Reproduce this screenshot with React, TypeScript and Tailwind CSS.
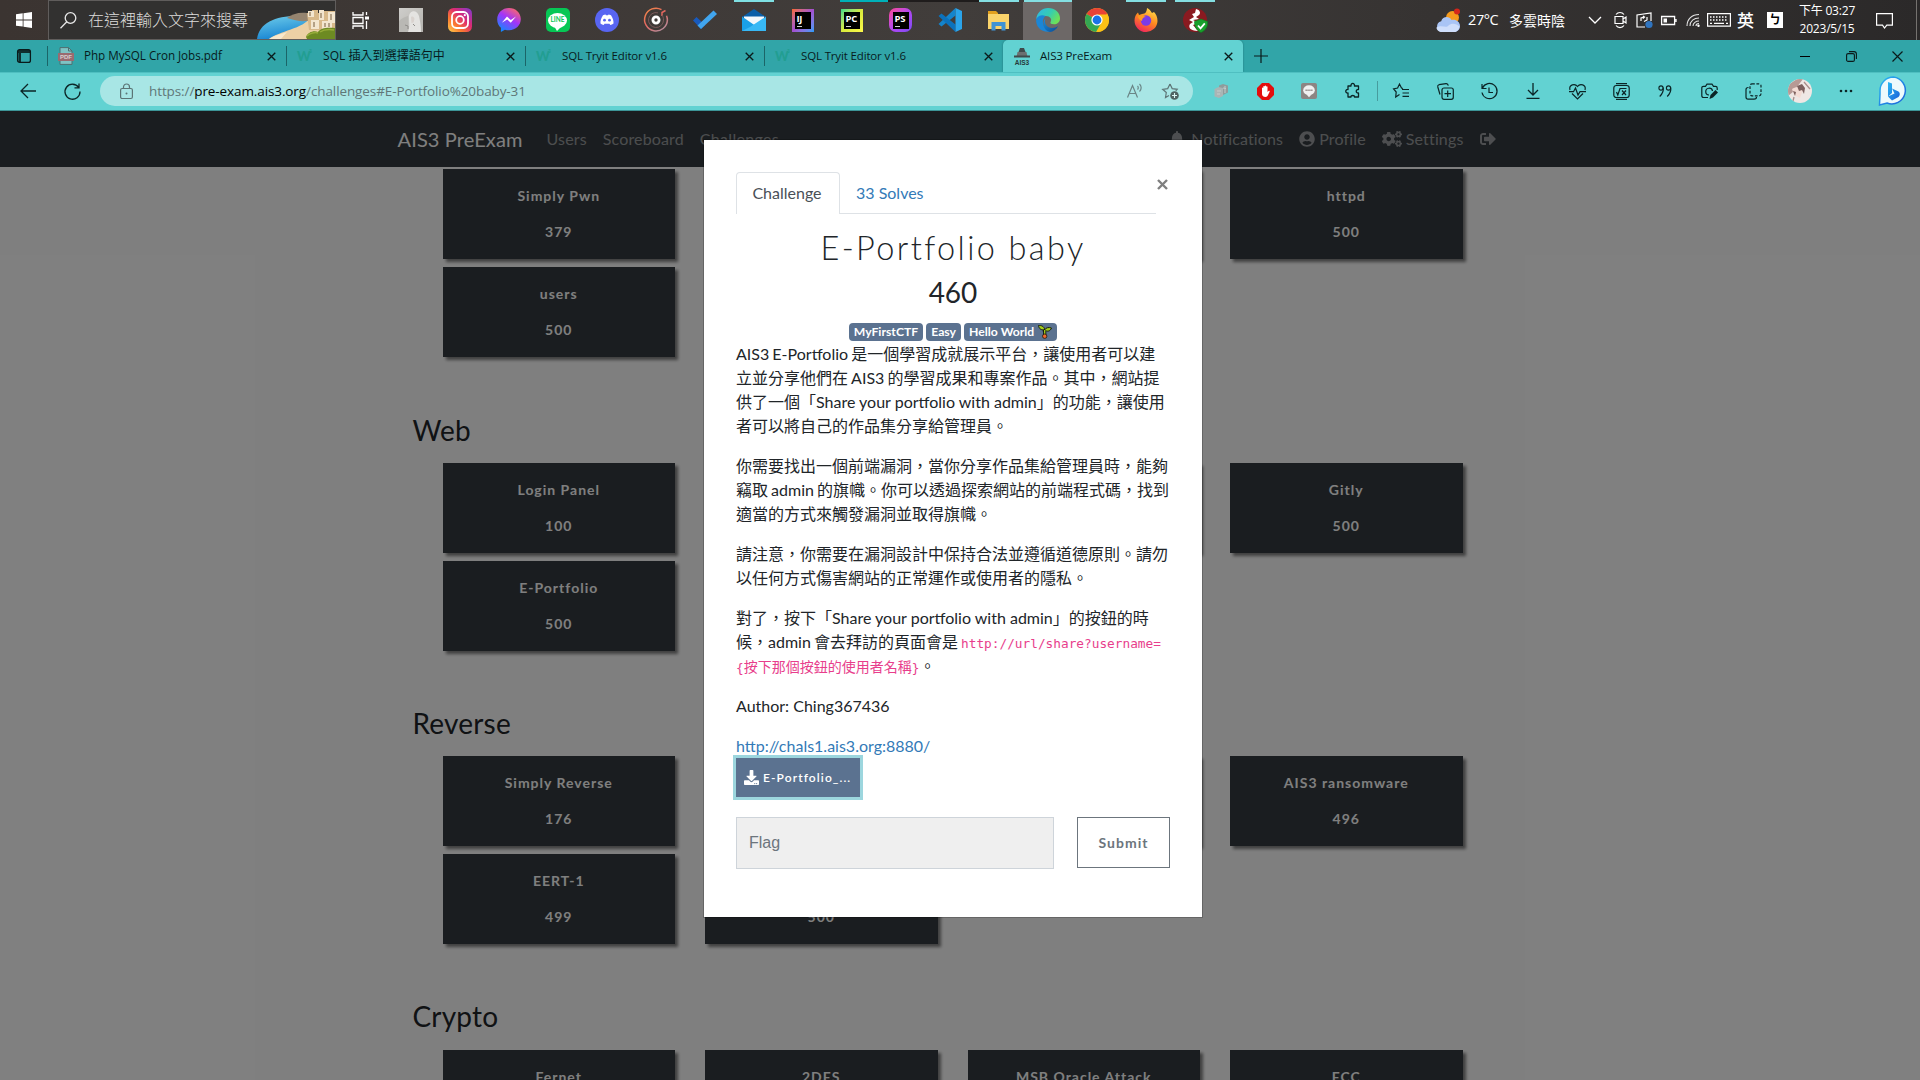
import React from "react";
import { FaBell, FaUserCircle, FaCogs, FaSignOutAlt, FaDownload } from "react-icons/fa";

type Kids = { children?: React.ReactNode };

/* ---------- taskbar ---------- */

const TaskIcon = ({ children }: Kids) => (
  <div className="flex h-10 w-[49px] shrink-0 items-center justify-center">{children}</div>
);

const Svg = ({ children, s = 24, vb = "0 0 24 24" }: Kids & { s?: number; vb?: string }) => (
  <svg width={s} height={s} viewBox={vb} fill="none" className="shrink-0 overflow-visible">
    {children}
  </svg>
);

const TaskView = () => (
  <Svg s={17} vb="0 0 17 17">
    <path d="M1 0v3h10V0M1 17v-3h10v3M1 5.500h10v6H1zM14.500 0v3M14.500 9v8" stroke="#fff" strokeWidth="1.300" />
    <path d="M13 4.500h4v3h-4z" fill="#fff" />
  </Svg>
);
const Portrait = () => (
  <Svg>
    <defs>
      <linearGradient id="pt" x1="0" y1="0" x2="1" y2="1">
        <stop offset="0" stopColor="#cfcecb" />
        <stop offset="1" stopColor="#b4b2ae" />
      </linearGradient>
    </defs>
    <rect width="24" height="24" fill="url(#pt)" />
    <path d="M0 13c3-3 6-4 9-5v16H0z" fill="#b9b8b4" />
    <path d="M10 9c0-7 8-8 10-1 1 5 2 9 2 16H9c2-5 1-9 1-15z" fill="#e4e3e1" />
    <path d="M12 9c2-1 3 0 3.500 2l-1 3.500-2 .5z" fill="#d9d2ce" />
    <path d="M6 17l3 1v3M14 16l2 2" stroke="#8f8d8a" strokeWidth="1" />
  </Svg>
);
const Instagram = () => (
  <Svg>
    <defs>
      <linearGradient id="ig" x1="0" y1="1" x2="1" y2="0">
        <stop offset="0" stopColor="#ffd34f" />
        <stop offset=".3" stopColor="#fb7a2f" />
        <stop offset=".6" stopColor="#dc2a73" />
        <stop offset="1" stopColor="#7a3bd6" />
      </linearGradient>
    </defs>
    <rect width="24" height="24" rx="5.500" fill="url(#ig)" />
    <rect x="4" y="4" width="16" height="16" rx="4.500" stroke="#fff" strokeWidth="1.800" />
    <circle cx="12" cy="12" r="3.800" stroke="#fff" strokeWidth="1.800" />
    <circle cx="16.800" cy="7.200" r="1.100" fill="#fff" />
  </Svg>
);
const Messenger = () => (
  <Svg>
    <defs>
      <linearGradient id="ms" x1="0.2" y1="1" x2="0.8" y2="0">
        <stop offset="0" stopColor="#0a8cff" />
        <stop offset=".55" stopColor="#a334fa" />
        <stop offset="1" stopColor="#ff6a66" />
      </linearGradient>
    </defs>
    <path d="M12 0C5.300 0 .2 4.900.2 11.400c0 3.400 1.400 6.300 3.700 8.300V24l4-2.200c1.300.4 2.600.5 4.100.5 6.700 0 11.800-4.800 11.800-11.200S18.700 0 12 0z" fill="url(#ms)" />
    <path d="M4.800 14.800l5.200-6.200 3.800 3.400 5.200-3.400-5.200 6.200-3.600-3.400z" fill="#fff" />
  </Svg>
);
const Line = () => (
  <div className="flex h-6 w-6 items-center justify-center rounded-[5px] bg-[#06c755]">
    <div className="relative flex h-[15px] w-[19px] items-center justify-center rounded-[50%] bg-white">
      <span className="text-[6.5px] leading-none font-bold text-[#06c755]">LINE</span>
      <svg className="absolute top-[13px] left-[6px]" width="8" height="5" viewBox="0 0 8 5"><path d="M0 0h8L3 5z" fill="#fff" /></svg>
    </div>
  </div>
);
const Discord = () => (
  <Svg>
    <circle cx="12" cy="12" r="12" fill="#5865f2" />
    <path d="M8 7.300c1-.5 2-.8 2.500-.8l.4.8h2.200l.4-.8c.6 0 1.600.3 2.500.8 2 3 2.700 5.500 2.500 8.300-1 .8-2 1.300-3.200 1.500l-.8-1.400h-5l-.8 1.400c-1.200-.2-2.200-.7-3.200-1.500C5.300 12.800 6 10.300 8 7.300z" fill="#fff" />
    <circle cx="9.500" cy="12.200" r="1.400" fill="#5865f2" />
    <circle cx="14.500" cy="12.200" r="1.400" fill="#5865f2" />
  </Svg>
);
const Groove = () => (
  <Svg>
    <defs>
      <linearGradient id="gr" x1="0" y1="0" x2="0.7" y2="1">
        <stop offset="0" stopColor="#f28b45" />
        <stop offset=".5" stopColor="#e6685f" />
        <stop offset="1" stopColor="#b98a98" />
      </linearGradient>
    </defs>
    <path d="M17.500 1.600A11.400 11.400 0 1 0 23.400 12c0-1.600-.3-3-.9-4.300" stroke="url(#gr)" strokeWidth="1.500" />
    <path d="M18 8V4.500l3.500-2" stroke="#e6685f" strokeWidth="1.500" />
    <path d="M18 7c1 1.400 1.500 3 1.500 5A7.500 7.500 0 1 1 14 4.800" stroke="#7a5a5a" strokeWidth="1" />
    <circle cx="12" cy="12" r="3.100" stroke="#fff" strokeWidth="2.800" />
  </Svg>
);
const ToDo = () => (
  <Svg>
    <path d="M0 12.500l3.500-3.500L12 17l-4 4z" fill="#185abd" />
    <path d="M8 21l-3.500-3.500L20.500 2.500 24 6z" fill="#41a5ee" />
  </Svg>
);
const Mail = () => (
  <Svg>
    <path d="M0 9l12-8 12 8z" fill="#0a5ea8" />
    <path d="M2 8.500h20V17H2z" fill="#f3f7fb" />
    <path d="M0 8.500L13 17.500 24 23H0z" fill="#1aa0e8" />
    <path d="M24 8.500L8 19l-8 4h24z" fill="#38b8f5" />
  </Svg>
);
const JetBrains = ({ label, bg, hex }: { label: string; bg: string; hex?: boolean }) => (
  <div className={hex ? `flex h-[24px] w-[23px] items-center justify-center rounded-[7px] ${bg}` : `flex h-[23px] w-[22px] items-center justify-center ${bg}`}>
    <div className="flex h-[17px] w-[16px] flex-col bg-black pt-[2px] pl-[2px]">
      <span className="font-['Open_Sans'] text-[9.5px] leading-[9px] font-bold tracking-[-0.3px] text-white">{label}</span>
      <span className="mt-[3px] h-[1.5px] w-[5px] bg-[#cfcfcf]" />
    </div>
  </div>
);
const VSCode = () => (
  <Svg>
    <path d="M17.500 7v10L11 12z" fill="none" />
    <path d="M17.500 0v7.500L3.500 18.500.5 16z" fill="#1484cc" />
    <path d="M17.500 24v-7.500L3.500 5.500.5 8z" fill="#0b72bd" />
    <path d="M17.500 0L24 3v18l-6.500 3z" fill="#2ba4ea" />
  </Svg>
);
const Explorer = () => (
  <Svg>
    <path d="M1 3h8l2 2v4H1z" fill="#e3a11e" />
    <path d="M1 6h21v15H1z" fill="#fbd46b" />
    <path d="M4.500 22.500v-8.500h14v8.500h-4V18h-6v4.500z" fill="#3f93d4" />
  </Svg>
);
const Edge = () => (
  <Svg>
    <defs>
      <linearGradient id="eg" x1="0" y1="0" x2="1" y2=".5">
        <stop offset="0" stopColor="#2fb6ea" />
        <stop offset=".6" stopColor="#36cdb0" />
        <stop offset="1" stopColor="#6ce05a" />
      </linearGradient>
      <linearGradient id="eb" x1="0" y1="0" x2="1" y2="1">
        <stop offset="0" stopColor="#1c8fdc" />
        <stop offset="1" stopColor="#0c4a92" />
      </linearGradient>
    </defs>
    <path d="M.2 11C1 4.500 6 0 12.200 0 19 0 24 4.800 24 10.200c0 4-3 6-6 6-2.800 0-4-1-3.500-2 2-3-.5-6.200-4.500-6.200C5.500 8 2 9.500.2 11z" fill="url(#eg)" />
    <path d="M.2 11C3 6.500 7 7 9.500 8c-2 2-3 4.200-2.500 7.200.8 4.500 4.500 8 9 8C7 26-.8 19.500.2 11z" fill="#1b86d6" />
    <path d="M9.500 10.500c-2 4 1 9.500 6.500 9.500 2.500 0 4.500-.8 6.200-2-2 4-5 5.600-8.200 6C7.500 23 5.500 14 9.500 10.500z" fill="url(#eb)" />
  </Svg>
);
const Chrome = () => (
  <Svg>
    <circle cx="12" cy="12" r="12" fill="#fbc116" />
    <path d="M12 12L1.600 6a12 12 0 0 1 20.800 0z" fill="#ea4335" />
    <path d="M12 12L1.600 6a12 12 0 0 0 9.400 18l5.500-9.500z" fill="#34a853" />
    <path d="M12 6.500h10.700A12 12 0 0 1 12 24l5-9z" fill="#fbc116" />
    <circle cx="12" cy="12" r="5.600" fill="#fff" />
    <circle cx="12" cy="12" r="4.400" fill="#1a73e8" />
  </Svg>
);
const Firefox = () => (
  <Svg>
    <defs>
      <linearGradient id="ff" x1=".8" y1="0" x2=".3" y2="1">
        <stop offset="0" stopColor="#ffe14d" />
        <stop offset=".5" stopColor="#ff8a1f" />
        <stop offset="1" stopColor="#f0245c" />
      </linearGradient>
    </defs>
    <path d="M13 0c4 2 4 4 5 5l2-1c2 2 3.500 5 3.500 9A11.300 11.300 0 0 1 12 24 11.500 11.500 0 0 1 .5 12.500C.5 9 2 6 4 4.500L5 7l3-1c2-.3 3-.5 4-2 .7-1.200 1-2.500 1-4z" fill="url(#ff)" />
    <circle cx="12" cy="12.500" r="5.200" fill="#7a3be8" />
    <path d="M4 8c3-2 6 0 8 1-3 0-4 2-4 4-2-1-4-2-4-5z" fill="#ff9b22" />
  </Svg>
);
const Wireless = () => (
  <Svg>
    <circle cx="12" cy="12" r="12" fill="#8a1a20" />
    <path d="M13 1c4 1 5 4 3 6l-3 2 3 2-6 1 6 3-6 2 5 6C7 23 5 19 7 16l3-2-4-2 5-3-2-3 3-1z" fill="#fff" />
    <path d="M18 11l6.500 2.500c.5 5-2 9-6.500 11-4.500-2-6.500-6-6.500-11z" fill="#18a02c" stroke="#0c7a1c" strokeWidth=".6" />
    <path d="M15 17.500l2.500 2.800 4.300-5" stroke="#fff" strokeWidth="1.800" />
  </Svg>
);

const SearchArt = () => (
  <svg width="78" height="38" viewBox="0 0 78 38" className="shrink-0">
    <defs>
      <linearGradient id="sea" x1="0" y1="0" x2="0.4" y2="1">
        <stop offset="0" stopColor="#6fcdea" />
        <stop offset="1" stopColor="#1583d2" />
      </linearGradient>
    </defs>
    <path d="M0 38C2 22 18 15 40 15l22 2-24 21z" fill="url(#sea)" />
    <path d="M12 38c10-8 34-10 42-22l24 4v18z" fill="#ecd0a5" />
    <path d="M12 38c6-4 12-5 18-7l-6 7z" fill="#f8e8cc" />
    <path d="M30 17c5-4 12-6 20-5l6 6c-8 4-16 2-26-1z" fill="#95846f" />
    <path d="M50 12h5V9h6v3h6V10h11v19H52z" fill="#d8b98a" />
    <path d="M51 10h6v6h-6zM62 9h5v10h-5zM71 11h7v11h-7zM54 19h8v9h-8zM65 20h10v8H65z" fill="#f3e6cf" />
    <path d="M53 11v4M64 12v5M74 13v6M57 21v5M68 22v4M72 22v4" stroke="#8a7456" strokeWidth="1.200" />
    <path d="M49 36c2-5 8-7 12-5 2-4 9-5 17-4v11H50z" fill="#6d8a22" />
    <path d="M50 35c3-3 8-4 11-3M63 31c3-2 8-3 14-2" stroke="#97ad3a" strokeWidth="1.500" fill="none" />
  </svg>
);

const Weather = () => (
  <svg width="25" height="25" viewBox="0 0 25 25" className="shrink-0">
    <circle cx="16.500" cy="9.500" r="6.500" fill="#f59a1c" />
    <circle cx="21" cy="3.500" r="3" fill="#d3261b" />
    <path d="M6 24a5.500 5.500 0 0 1-.8-10.800C6.500 8.500 13 7.500 15.500 12c4-1 8.500 1.500 8.500 6 0 3.500-2.500 6-6 6z" fill="#a9c4f5" />
    <path d="M6 24c-3 0-5.500-2-5.500-4.500 5-3 10 1 12-2 3-3 8-2 11 1-.5 3.500-3 5.500-5.500 5.500z" fill="#cfdefb" />
  </svg>
);

function Taskbar() {
  return (
    <div className="relative flex h-10 shrink-0 items-center bg-linear-to-r from-[#3b3431] via-[#413d3b] to-[#2b2929] text-white">
      <div className="absolute top-0 left-0 flex h-[2px] w-full">
        <span className="ml-[734px] w-[40px] bg-[#7fe0e3]" />
        <span className="ml-[66px] w-[48px] bg-[#00b0b8]" />
        <span className="w-[91px] bg-[#1f1c1c]" />
        <span className="w-[40px] bg-[#84dfe2]" />
        <span className="ml-[5px] w-[48px] bg-[#84dfe2]" />
        <span className="ml-[54px] w-[40px] bg-[#84dfe2]" />
        <span className="ml-[9px] w-[40px] bg-[#84dfe2]" />
      </div>
      <div className="flex w-[48px] justify-center">
        <Svg s={16} vb="0 0 16 16">
          <path d="M0 2.300L6.700 1.300v6.200H0zM7.500 1.200L16 0v7.500H7.500zM0 8.400h6.700v6.200L0 13.700zM7.500 8.400H16V16l-8.500-1.200z" fill="#fff" />
        </Svg>
      </div>
      <div className="flex h-10 w-[288px] items-center border border-[#605d5c] bg-[#323130] pl-[11px]">
        <Svg s={17} vb="0 0 17 17">
          <circle cx="10.500" cy="6" r="5.300" stroke="#e8e8e8" strokeWidth="1.300" />
          <path d="M6.800 9.800L.5 16.200" stroke="#e8e8e8" strokeWidth="1.300" />
        </Svg>
        <span className="ml-[11px] w-[170px] text-[16px] leading-none font-light whitespace-nowrap text-[#dddcdb]">在這裡輸入文字來搜尋</span>
        <SearchArt />
      </div>
      <div className="flex w-[50px] justify-center pr-[2px]"><TaskView /></div>
      <TaskIcon><Portrait /></TaskIcon>
      <TaskIcon><Instagram /></TaskIcon>
      <TaskIcon><Messenger /></TaskIcon>
      <TaskIcon><Line /></TaskIcon>
      <TaskIcon><Discord /></TaskIcon>
      <TaskIcon><Groove /></TaskIcon>
      <TaskIcon><ToDo /></TaskIcon>
      <TaskIcon><Mail /></TaskIcon>
      <TaskIcon><JetBrains label="IJ" bg="bg-linear-to-br from-[#f8661f] via-[#a14fd0] to-[#0b9dfa]" /></TaskIcon>
      <TaskIcon><JetBrains label="PC" bg="bg-linear-to-br from-[#21d789] via-[#d8ea3c] to-[#fcf84a]" /></TaskIcon>
      <TaskIcon><JetBrains label="PS" hex bg="bg-linear-to-br from-[#ff3d8f] via-[#b345f1] to-[#7a4bf5]" /></TaskIcon>
      <TaskIcon><VSCode /></TaskIcon>
      <TaskIcon><Explorer /></TaskIcon>
      <div className="flex h-[38px] w-[49px] items-center justify-center self-end bg-[#6d6867] pb-[2px]"><Edge /></div>
      <TaskIcon><Chrome /></TaskIcon>
      <TaskIcon><Firefox /></TaskIcon>
      <TaskIcon><Wireless /></TaskIcon>

      <div className="ml-[217px] flex items-center"><Weather /></div>
      <span className="ml-[7px] w-[41px] font-['Open_Sans'] text-[14.5px] tracking-[-0.4px]">27°C</span>
      <span className="w-[60px] text-[14px] whitespace-nowrap">多雲時陰</span>
      <div className="ml-[20px] flex w-[12px]"><Svg s={12} vb="0 0 12 12"><path d="M0 3l6 6 6-6" stroke="#fff" strokeWidth="1.300" /></Svg></div>
      <div className="ml-[13px] flex w-[14px]">
        <Svg s={16} vb="0 0 16 16"><path d="M1 4.500h8v7H1zM9 7l3-2v6L9 9M2 2.500C4-.2 8-.2 10 2.500M2 13.500c2 2.700 6 2.700 8 0" stroke="#fff" strokeWidth="1.200" /></Svg>
      </div>
      <div className="ml-[8px] flex w-[16px]">
        <Svg s={16} vb="0 0 16 16"><path d="M15 9V1L1 3v12h8M5 9V6l3-1M11 5v3l-3 1.500M7 4l1.500 1L7 6.500" stroke="#fff" strokeWidth="1.200" /><circle cx="13" cy="12.500" r="3.600" fill="#2f74c0" /></Svg>
      </div>
      <div className="ml-[9px] flex w-[16px]">
        <Svg s={16} vb="0 0 16 16"><path d="M.6 4.500h13v8h-13zM15 7v3" stroke="#fff" strokeWidth="1.300" /><path d="M2.500 6.500h3.500v4H2.500z" fill="#fff" /></Svg>
      </div>
      <div className="ml-[9px] flex w-[14px]">
        <Svg s={14} vb="0 0 14 14"><path d="M1 13C1 6 6 1.500 13 1.500M4 13c0-5 4-8 9-8M7 13c0-3 3-5 6-5M10 13c0-1.500 1-2.500 3-2.500" stroke="#e5e5e5" strokeWidth="1.100" /><circle cx="12.500" cy="12.700" r="1.200" fill="#fff" /></Svg>
      </div>
      <div className="ml-[7px] flex w-[24px]">
        <svg width="24" height="14" viewBox="0 0 24 14" fill="none"><path d="M.6.600h22.800v12.600H.6z" stroke="#fff" strokeWidth="1.200" /><path d="M3 4h18M3 7h18" stroke="#fff" strokeWidth="1.300" strokeDasharray="1.500 1.500" /><path d="M3 10.300h2M7 10.300h10M19 10.300h2" stroke="#fff" strokeWidth="1.300" /></svg>
      </div>
      <span className="ml-[6px] text-[17px] leading-none font-medium">英</span>
      <span className="ml-[13px] flex h-4 w-4 items-center justify-center bg-white text-[12px] leading-none font-bold text-black">ㄅ</span>
      <div className="ml-[10px] flex w-[68px] flex-col items-center font-['Open_Sans','Noto_Sans_CJK_TC',sans-serif] text-[12px] leading-[18px] tracking-[-0.2px] whitespace-nowrap">
        <span>下午 03:27</span>
        <span>2023/5/15</span>
      </div>
      <div className="ml-[15px] flex"><Svg s={17} vb="0 0 17 17"><path d="M.6 1.600h15.800v11.500h-5.600L8.500 16l-2-2.900H.6z" stroke="#fff" strokeWidth="1.200" /></Svg></div>
      <span className="mr-[3px] ml-auto h-full w-px bg-[#75726f]" />
    </div>
  );
}

/* ---------- browser tabs ---------- */

const CloseX = () => (
  <Svg s={9} vb="0 0 10 10"><path d="M.8.800l8.400 8.400M9.200.800L.8 9.200" stroke="#0a1a1a" strokeWidth="1.500" /></Svg>
);

const PdfIcon = () => (
  <svg width="16" height="18" viewBox="0 0 16 18" fill="none">
    <path d="M2 .6h8.500L14 4v13.400H2z" fill="#7fc3c4" stroke="#4e6f70" />
    <path d="M10.500.6V4H14" stroke="#4e6f70" />
    <path d="M0 6h16v8H0z" fill="#9a6b70" />
    <text x="8" y="12.300" fontSize="6" fontWeight="700" fill="#d8d0d0" textAnchor="middle" fontFamily="Liberation Sans">PDF</text>
  </svg>
);

const W3 = () => (
  <span className="relative w-4 font-['Lato'] text-[13px] leading-none font-black tracking-[-1px] text-[#229e92]">
    W<sup className="absolute top-[1px] left-[12px] text-[5px]">3</sup>
  </span>
);

const HatIcon = () => (
  <svg width="16" height="18" viewBox="0 0 16 18">
    <path d="M4.500 5L6 1h4l1.500 4z" fill="#3f4a4b" />
    <path d="M3.500 5h9l.8 4H2.700z" fill="#6b6f70" />
    <path d="M0 8.500h16v2H0z" fill="#3f4a4b" />
    <text x="8" y="17.500" fontSize="6.500" fontWeight="700" fill="#26393a" textAnchor="middle" fontFamily="Liberation Sans">AIS3</text>
  </svg>
);

function Tab({ icon, title, active, text = "text-[11.5px] tracking-[-0.15px]" }: { icon: React.ReactNode; title: string; active?: boolean; text?: string }) {
  return (
    <div className={active ? "flex h-[32px] w-[240px] items-center rounded-t-[5px] bg-[#62d2d2] shadow-[0_0_2px_#1b6f72]" : "flex h-[32px] w-[239px] items-center"}>
      <span className={active ? "w-0" : "h-5 w-px bg-[#1b6568]"} />
      <span className={active ? "ml-[11px] flex w-4 justify-center" : "ml-[10px] flex w-4 justify-center"}>{icon}</span>
      <span className={`ml-[10px] flex-1 leading-none whitespace-nowrap text-[#071b1c] ${text}`}>{title}</span>
      <span className="mr-[10px]"><CloseX /></span>
    </div>
  );
}

function TabStrip() {
  return (
    <div className="flex h-[32px] shrink-0 items-center bg-[#31a5a8] font-['Open_Sans','Noto_Sans_CJK_TC',sans-serif]">
      <div className="flex w-[47px] justify-center">
        <Svg s={14} vb="0 0 14 14"><rect x=".6" y=".6" width="12.800" height="12.800" rx="2" stroke="#0a1a1a" strokeWidth="1.300" /><path d="M1 1h12v3H1zM1.500 3h2.500v10H1.500z" fill="#0a1a1a" opacity=".85" /></Svg>
      </div>
      <Tab icon={<PdfIcon />} title="Php MySQL Cron Jobs.pdf" text="text-[11.7px] tracking-[-0.05px]" />
      <Tab icon={<W3 />} title="SQL 插入到選擇語句中" text="text-[12px] tracking-[0.05px]" />
      <Tab icon={<W3 />} title="SQL Tryit Editor v1.6" />
      <Tab icon={<W3 />} title="SQL Tryit Editor v1.6" />
      <Tab icon={<HatIcon />} title="AIS3 PreExam" active />
      <div className="ml-[11px]"><Svg s={14} vb="0 0 14 14"><path d="M7 0v14M0 7h14" stroke="#0a1a1a" strokeWidth="1.200" /></Svg></div>
      <div className="ml-auto flex items-center">
        <div className="flex w-[46px] justify-center"><span className="h-px w-[10px] bg-black" /></div>
        <div className="flex w-[46px] justify-center"><Svg s={11} vb="0 0 11 11"><rect x=".6" y="2.600" width="7.800" height="7.800" rx="1.500" stroke="#0a1a1a" strokeWidth="1.100" /><path d="M3 .6h5c1.400 0 2.400 1 2.400 2.400v5" stroke="#0a1a1a" strokeWidth="1.100" /></Svg></div>
        <div className="flex w-[46px] justify-center"><Svg s={11} vb="0 0 11 11"><path d="M.5.500l10 10M10.500.500l-10 10" stroke="#0a1a1a" strokeWidth="1.200" /></Svg></div>
      </div>
    </div>
  );
}

/* ---------- address bar ---------- */

const Slot = ({ children }: Kids) => <div className="flex w-[44px] shrink-0 justify-center">{children}</div>;
const K = "#0b2526";

function Toolbar() {
  return (
    <div className="flex h-[39px] shrink-0 items-center border-t border-b border-t-[#4fbfc1] border-b-[#3c9597] bg-[#62d2d2] pb-px font-['Open_Sans',sans-serif]">
      <div className="flex w-[56px] justify-center">
        <Svg s={16} vb="0 0 16 16"><path d="M8 1L1 8l7 7M1 8h15" stroke={K} strokeWidth="1.300" /></Svg>
      </div>
      <div className="flex w-[32px] justify-center">
        <Svg s={17} vb="0 0 17 17"><path d="M14.700 4.500A7.500 7.500 0 1 0 16 8.500M15 .5v4.300h-4.500" stroke={K} strokeWidth="1.300" /></Svg>
      </div>
      <div className="ml-[12px] flex h-[30px] w-[1093px] items-center rounded-full bg-[#a8e6e5] pl-[19px]">
        <Svg s={15} vb="0 0 15 15"><rect x="1.600" y="4.500" width="11.800" height="10" rx="1.500" stroke="#5b7475" strokeWidth="1.200" /><path d="M4.500 4.500V3a3 3 0 0 1 6 0v1.500" stroke="#5b7475" strokeWidth="1.200" /><circle cx="7.500" cy="9.500" r="1" fill="#5b7475" /></Svg>
        <span className="ml-[15px] text-[13.5px] tracking-[-0.1px] text-[#5f7778]">
          https://<span className="text-black">pre-exam.ais3.org</span>/challenges#E-Portfolio%20baby-31
        </span>
        <span className="ml-auto flex w-[16px]">
          <Svg s={16} vb="0 0 16 16"><path d="M.5 14.500L5.500 2.500l5 12M2.300 10.500h6.500M10.500 3c1 .8 1 2.500 0 3.500M12.500 1c2.200 2 2.200 5.500 0 7.500" stroke="#6a8586" strokeWidth="1.200" /></Svg>
        </span>
        <span className="mr-[14px] ml-[19px] flex w-[17px]">
          <Svg s={17} vb="0 0 17 17"><path d="M8 1l2.200 4.600 5 .7-1.400 1.500M7 12.500l-3.500 2 .8-5L.7 6.300l5-.7L8 1" stroke="#5f7778" strokeWidth="1.200" /><circle cx="12.500" cy="12.500" r="4.300" fill="#4f6263" /><path d="M12.500 10v5M10 12.500h5" stroke="#d9f4f4" strokeWidth="1.100" /></Svg>
        </span>
      </div>
      <div className="ml-[6px] flex items-center">
        <Slot><Svg s={16} vb="0 0 16 16"><path d="M6 2.500L10 1l5 1.500v7L10 12l-4-2z" fill="#8f9c9c" /><path d="M1.500 6l4-2 4.500 1v8l-4 2-4.500-1.500z" fill="#a9b5b5" /><path d="M10 5l3 .5M12 3v7M4 8h4M4 11h3" stroke="#c3cccc" strokeWidth="1" /></Svg></Slot>
        <Slot><Svg s={17} vb="0 0 17 17"><path d="M5 0h7l5 5v7l-5 5H5l-5-5V5z" fill="#e40d0d" /><path d="M5 9V5c0-.8 1.300-.8 1.300 0V3.500c0-.8 1.400-.8 1.400 0V3c0-.8 1.400-.8 1.400 0v.8c0-.8 1.400-.8 1.400 0V9l1-1c.8-.7 1.600.1 1 .9L10.500 13c-1.500 2-5.500 1-5.500-2z" fill="#fff" /></Svg></Slot>
        <Slot><Svg s={16} vb="0 0 16 16"><rect width="16" height="16" rx="2" fill="#8d8583" /><ellipse cx="8" cy="7.300" rx="5.800" ry="5" fill="#f1f1f1" /><path d="M5.500 11.500h5L8 14.300z" fill="#f1f1f1" /><path d="M4.500 7.300h7" stroke="#8d8583" strokeWidth="1.600" strokeDasharray="1.300 .6" /></Svg></Slot>
        <Slot><Svg s={16} vb="0 0 16 16"><path d="M3 3h3c-.5-3.500 4-3.500 3.500 0h4v3.500c-3-.5-3 4 0 3.500V14H9.500c.5-2-4-2-3.500 0H3v-4c-3 .5-3-4 0-3.500z" stroke={K} strokeWidth="1.300" strokeLinejoin="round" /></Svg></Slot>
        <div className="flex w-[4px] justify-center"><span className="h-5 w-px bg-[#479c9e]" /></div>
        <Slot><Svg s={16} vb="0 0 16 16"><path d="M6.500 11.500L2.700 14l.5-5L.6 5.800l4-.8L6.500 1l2 4 1.500.5M9 6.500h7M9.500 10H16M9.500 13.300H16" stroke={K} strokeWidth="1.200" /></Svg></Slot>
        <Slot><Svg s={17} vb="0 0 17 17"><rect x="5" y="5" width="11.300" height="11.300" rx="2" stroke={K} strokeWidth="1.200" /><path d="M3 11.500L.8 4c-.3-1.200.2-2 1.200-2.300l7-1c1.300-.2 2 .5 2.300 2M10.700 7.500v6.500M7.500 10.700H14" stroke={K} strokeWidth="1.200" /></Svg></Slot>
        <Slot><Svg s={17} vb="0 0 17 17"><path d="M1.500 5A7.600 7.600 0 1 1 1 9.500M1 1v4.500h4.500M8 4.500V9.500h4" stroke={K} strokeWidth="1.200" /></Svg></Slot>
        <Slot><Svg s={16} vb="0 0 16 16"><path d="M8 0v12M3 7l5 5 5-5M1.500 15.300h13" stroke={K} strokeWidth="1.300" /></Svg></Slot>
        <Slot><Svg s={17} vb="0 0 17 17"><path d="M1 7C-.5 1.500 6 0 8.500 3.500 11 0 17.500 1.500 16 7M3 10.500l5.500 5.500 5.500-5.500M0 8.700h4.500L6.500 5l2.500 7 2-3.300h6" stroke={K} strokeWidth="1.200" /></Svg></Slot>
        <Slot><Svg s={17} vb="0 0 17 17"><rect x=".8" y="2.500" width="15.400" height="12" rx="2.500" stroke={K} strokeWidth="1.200" /><path d="M3 .7h11M3 16.300h11M3.500 9l1.300 3L7 5.500h6.500M9 7.500l4 4.500M13 7.500L9 12" stroke={K} strokeWidth="1.200" /></Svg></Slot>
        <Slot><Svg s={14} vb="0 0 14 14"><circle cx="3" cy="4" r="2.100" stroke={K} strokeWidth="1.100" /><path d="M5.200 3.500c.5 3-.5 6-3.500 9" stroke={K} strokeWidth="1.200" /><circle cx="10.500" cy="4" r="2.100" stroke={K} strokeWidth="1.100" /><path d="M12.700 3.500c.5 3-.5 6-3.500 9" stroke={K} strokeWidth="1.200" /></Svg></Slot>
        <Slot><Svg s={17} vb="0 0 17 17"><path d="M7 14.500H2.500c-1 0-1.700-.7-1.700-1.700V5c0-1 .7-1.700 1.700-1.700h2L6 1.200h5l1.500 2.100h2c1 0 1.700.7 1.700 1.700v2" stroke={K} strokeWidth="1.200" /><path d="M11.500 8A3.400 3.400 0 1 0 8 12" stroke={K} strokeWidth="1.200" /><path d="M8.500 16l1-4 5-5 2.500 2.500-5 5z" fill={K} /></Svg></Slot>
        <Slot><Svg s={17} vb="0 0 17 17"><path d="M3.500 4.500C1.500 4.500 1 5.500 1 6.500V14c0 1.300.8 2.200 2 2.200h6c1.500 0 2.500-.7 2.500-2.200" stroke={K} strokeWidth="1.200" /><rect x="5" y=".8" width="11" height="12" rx="2" stroke={K} strokeWidth="1.200" strokeDasharray="2.800 1.600" /></Svg></Slot>
        <div className="ml-[2px] flex w-[46px] justify-center">
          <Svg><defs><clipPath id="av"><circle cx="12" cy="12" r="12" /></clipPath></defs><g clipPath="url(#av)"><path d="M0 0h24v24H0z" fill="#efe7e4" /><path d="M0 6l9-6h6L6 12l-6 5z" fill="#b79a95" /><path d="M4 10c4-3 9-2 11 1l-3 8-6-3z" fill="#f3dcd5" /><path d="M9 7l5-2 3 4-1 6-2-4-3 1zM5 12l3 1-1 4z" fill="#7d605e" /><path d="M16 3l6 7M6 18l-1 4" stroke="#a98e8b" strokeWidth="1.300" /></g></Svg>
        </div>
        <div className="flex w-[46px] justify-center"><Svg s={14} vb="0 0 14 14"><circle cx="2" cy="7" r="1.300" fill={K} /><circle cx="7" cy="7" r="1.300" fill={K} /><circle cx="12" cy="7" r="1.300" fill={K} /></Svg></div>
        <div className="flex w-[48px] justify-center">
          <Svg s={30} vb="0 0 30 30">
            <defs><linearGradient id="bi" x1="0" y1="0" x2="1" y2="1"><stop offset="0" stopColor="#2ab8f2" /><stop offset="1" stopColor="#1b5fd9" /></linearGradient></defs>
            <path d="M15.500 1A13.500 13.500 0 1 1 9 27L1.500 29 2 18V14.500A13.500 13.500 0 0 1 15.500 1z" fill="#eefafc" stroke="url(#bi)" strokeWidth="1.500" />
            <path d="M10 6l4 1.500V17l-4 3.500zM14 12.500l6.500 3c2 1.500 1.500 4 0 5.500L14 24.500l-4-4 6.500-3z" fill="url(#bi)" />
          </Svg>
        </div>
      </div>
    </div>
  );
}

/* ---------- page ---------- */

type Chal = [string, string] | null;

function Card({ c }: { c: Chal }) {
  if (!c) return <div />;
  return (
    <div className="h-[90px] bg-[#343a40] p-4 text-center text-[14px] leading-[21px] font-bold tracking-[1px] text-white shadow-[3px_3px_3px_gray]">
      <p className="mb-[15px] h-[21px]">{c[0]}</p>
      <p>{c[1]}</p>
    </div>
  );
}

function Grid({ items }: { items: Chal[] }) {
  return (
    <div className="mx-[45px] grid grid-cols-4 gap-x-[30px] gap-y-2">
      {items.map((c, i) => <Card key={i} c={c} />)}
    </div>
  );
}

const groups: { name: string; items: Chal[] }[] = [
  { name: "Web", items: [["Login Panel", "100"], ["", ""], ["", ""], ["Gitly", "500"], ["E-Portfolio", "500"]] },
  { name: "Reverse", items: [["Simply Reverse", "176"], ["", ""], ["", ""], ["AIS3 ransomware", "496"], ["EERT-1", "499"], ["", "500"]] },
  { name: "Crypto", items: [["Fernet", ""], ["2DES", ""], ["MSB Oracle Attack", ""], ["ECC", ""]] },
];

function Site() {
  return (
    <div className="h-full bg-white">
      <nav className="flex h-[56px] items-center bg-[#343a40] text-[16px] tracking-[0.15px] text-white/50">
        <div className="ml-[397.5px] flex w-[1110px] items-center">
          <span className="mr-4 text-[20px] tracking-[0.12px] text-white">AIS3 PreExam</span>
          <span className="px-2">Users</span>
          <span className="px-2">Scoreboard</span>
          <span className="px-2 tracking-[0.3px]">Challenges</span>
          <div className="ml-auto flex items-center">
            <span className="flex items-center px-2"><FaBell className="mr-[6px]" />Notifications</span>
            <span className="flex items-center px-2"><FaUserCircle className="mr-1" />Profile</span>
            <span className="flex items-center px-2"><FaCogs size={20} className="mr-1" />Settings</span>
            <span className="flex items-center px-2 pr-[12px]"><FaSignOutAlt /></span>
          </div>
        </div>
      </nav>
      <div className="ml-[397.5px] w-[1110px]">
        <div className="h-[245.5px] pt-[2px]">
          <Grid items={[["Simply Pwn", "379"], ["", ""], ["", ""], ["httpd", "500"], ["users", "500"]]} />
        </div>
        {groups.map((g) => (
          <section key={g.name} className="h-[293.3px]">
            <h3 className="mb-[16.2px] ml-[15px] text-[28px] leading-[34.4px] tracking-[0.2px] text-[#212529]">{g.name}</h3>
            <Grid items={g.items} />
          </section>
        ))}
      </div>
    </div>
  );
}

/* ---------- challenge dialog ---------- */

const Badge = ({ children }: Kids) => (
  <span className="flex h-[18px] items-center rounded-[4px] bg-[#5b7290] px-[5px] text-[12.2px] leading-none font-bold text-white">{children}</span>
);

const Seedling = () => (
  <svg width="14" height="14" viewBox="0 0 14 14" className="ml-[4px]">
    <path d="M6.500 11C7 8 7 6 5.800 4.500" stroke="#161c0e" strokeWidth="3.200" fill="none" />
    <path d="M.5.500C3 .3 6 1 6.700 4.500 3.500 5.500 1 4 .5.500zM6.500 5C8 2.500 10.500 2 13.500 3 12.500 6 9.500 7.200 6.500 5z" fill="#a5cf1c" stroke="#161c0e" strokeWidth="1" />
    <path d="M6.700 10V5" stroke="#a5cf1c" strokeWidth="1.300" />
    <circle cx="6.700" cy="11.200" r="2.200" fill="#f0682f" stroke="#161c0e" strokeWidth=".8" />
  </svg>
);

const Row = ({ children, tight }: Kids & { tight?: boolean }) => (
  <span className={tight ? "block h-6 whitespace-nowrap [word-spacing:-1px]" : "block h-6 whitespace-nowrap"}>{children}</span>
);

const Code = ({ children }: Kids) => (
  <code className="font-['DejaVu_Sans_Mono'] text-[12.78px] leading-none text-[#e83e8c]">{children}</code>
);

function Dialog() {
  return (
    <div className="absolute top-[28px] left-[703px] h-[779px] w-[500px] border border-black/20 bg-white bg-clip-padding px-[32px] pt-[32px] text-[16px] leading-6 text-[#212529]">
      <div className="flex">
        <div className="flex h-[42px] w-[420px] border-b border-[#dee2e6]">
          <span className="flex h-[42px] w-[104px] items-center justify-center rounded-t-[4px] border border-b-0 border-[#dee2e6] bg-white pr-[2px] pb-px text-[#495057]">Challenge</span>
          <span className="flex items-center pl-[16px] text-[#337ab7]">33 Solves</span>
        </div>
        <span className="mr-[2px] ml-auto flex h-[24px] items-center">
          <Svg s={11} vb="0 0 11 11"><path d="M1 1l9 9M10 1l-9 9" stroke="#7f7f7f" strokeWidth="2.400" /></Svg>
        </span>
      </div>
      <h2 className="mt-[15px] text-center text-[32.5px] leading-[38px] font-light tracking-[2.4px] whitespace-nowrap">E-Portfolio baby</h2>
      <h3 className="mt-[8px] text-center text-[28px] leading-[34px]">460</h3>
      <div className="mt-[14px] flex justify-center gap-[3px]">
        <Badge>MyFirstCTF</Badge>
        <Badge>Easy</Badge>
        <Badge>Hello World<Seedling /></Badge>
      </div>
      <div className="mt-px">
        <p className="mb-4">
          <Row tight>AIS3 E-Portfolio 是一個學習成就展示平台，讓使用者可以建</Row>
          <Row tight>立並分享他們在 AIS3 的學習成果和專案作品。其中，網站提</Row>
          <Row>供了一個「Share your portfolio with admin」的功能，讓使用</Row>
          <Row>者可以將自己的作品集分享給管理員。</Row>
        </p>
        <p className="mb-4">
          <Row>你需要找出一個前端漏洞，當你分享作品集給管理員時，能夠</Row>
          <Row tight>竊取 admin 的旗幟。你可以透過探索網站的前端程式碼，找到</Row>
          <Row>適當的方式來觸發漏洞並取得旗幟。</Row>
        </p>
        <p className="mb-4">
          <Row>請注意，你需要在漏洞設計中保持合法並遵循道德原則。請勿</Row>
          <Row>以任何方式傷害網站的正常運作或使用者的隱私。</Row>
        </p>
        <p className="mb-4">
          <Row>對了，按下「Share your portfolio with admin」的按鈕的時</Row>
          <Row tight>候，admin 會去拜訪的頁面會是 <Code>http://url/share?username=</Code></Row>
          <Row><Code>{"{"}<span className="font-['Noto_Sans_CJK_TC'] text-[14px]">按下那個按鈕的使用者名稱</span>{"}"}</Code>。</Row>
        </p>
        <p className="mb-4">Author: Ching367436</p>
        <p className="text-[#337ab7]">http://chals1.ais3.org:8880/</p>
      </div>
      <div className="flex h-[39px] w-[124px] items-center bg-[#5b7290] pl-[8px] text-[12px] font-semibold tracking-[1.1px] whitespace-nowrap text-white shadow-[0_0_0_3px_#9cd6de]">
        <FaDownload size={15} className="mr-[4px]" />E-Portfolio_...
      </div>
      <div className="mt-[20px] flex">
        <div className="flex h-[52px] w-[318px] items-center border border-[#ced4da] bg-[#efefef] pl-[12px] font-['Liberation_Sans'] text-[#6c757d]">Flag</div>
        <div className="ml-auto flex h-[51px] w-[93px] items-center justify-center border border-[#6c757d] text-[14px] font-bold tracking-[1px] text-[#6c757d]">Submit</div>
      </div>
    </div>
  );
}

export default function App() {
  return (
    <div lang="zh-Hant-TW" className="flex h-[1080px] w-[1920px] flex-col overflow-hidden font-['Lato','Noto_Sans_CJK_TC',sans-serif]">
      <Taskbar />
      <TabStrip />
      <Toolbar />
      <main className="relative flex-1 overflow-hidden">
        <Site />
        <div className="absolute inset-0 bg-black/50" />
        <Dialog />
      </main>
    </div>
  );
}
